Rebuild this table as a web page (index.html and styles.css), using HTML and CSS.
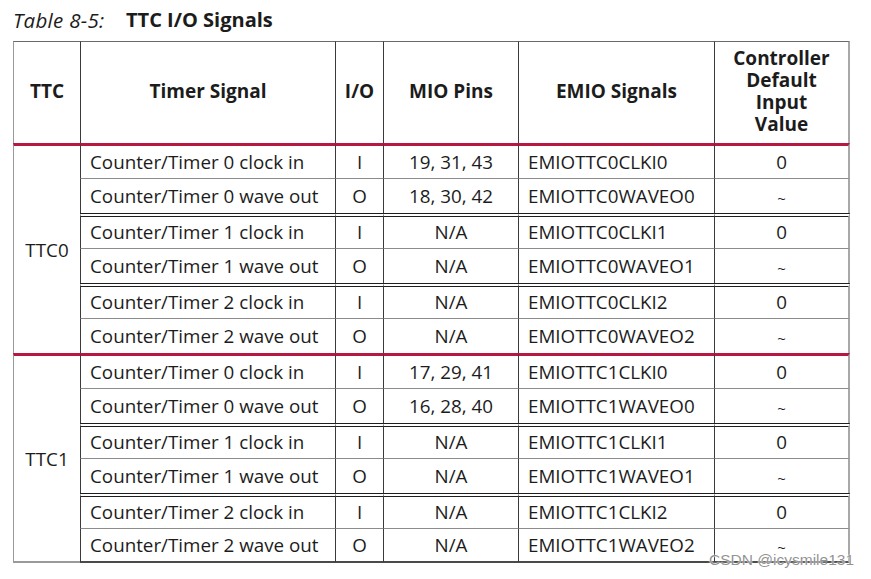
FILE: index.html
```html
<!DOCTYPE html>
<html>
<head>
<meta charset="utf-8">
<link rel="stylesheet" href="styles.css">
</head>
<body>
<div class="page">
  <div class="caption"><span class="cap-num">Table 8-5:</span><span class="cap-title">TTC I/O Signals</span></div>
  <table class="sig">
    <colgroup>
      <col class="c1"><col class="c2"><col class="c3"><col class="c4"><col class="c5"><col class="c6">
    </colgroup>
    <thead>
      <tr>
        <th class="first">TTC</th>
        <th>Timer Signal</th>
        <th>I/O</th>
        <th>MIO Pins</th>
        <th>EMIO Signals</th>
        <th class="last">Controller<br>Default<br>Input<br>Value</th>
      </tr>
    </thead>
    <tbody>
      <tr class="red">
        <td class="ttc" rowspan="6">TTC0</td>
        <td class="l">Counter/Timer 0 clock in</td><td>I</td><td>19, 31, 43</td><td class="l">EMIOTTC0CLKI0</td><td class="last">0</td>
      </tr>
      <tr>
        <td class="l">Counter/Timer 0 wave out</td><td>O</td><td>18, 30, 42</td><td class="l">EMIOTTC0WAVEO0</td><td class="last tilde">~</td>
      </tr>
      <tr class="dbl">
        <td class="l">Counter/Timer 1 clock in</td><td>I</td><td>N/A</td><td class="l">EMIOTTC0CLKI1</td><td class="last">0</td>
      </tr>
      <tr>
        <td class="l">Counter/Timer 1 wave out</td><td>O</td><td>N/A</td><td class="l">EMIOTTC0WAVEO1</td><td class="last tilde">~</td>
      </tr>
      <tr class="dbl">
        <td class="l">Counter/Timer 2 clock in</td><td>I</td><td>N/A</td><td class="l">EMIOTTC0CLKI2</td><td class="last">0</td>
      </tr>
      <tr>
        <td class="l">Counter/Timer 2 wave out</td><td>O</td><td>N/A</td><td class="l">EMIOTTC0WAVEO2</td><td class="last tilde">~</td>
      </tr>
      <tr class="red">
        <td class="ttc ttc-last" rowspan="6">TTC1</td>
        <td class="l">Counter/Timer 0 clock in</td><td>I</td><td>17, 29, 41</td><td class="l">EMIOTTC1CLKI0</td><td class="last">0</td>
      </tr>
      <tr>
        <td class="l">Counter/Timer 0 wave out</td><td>O</td><td>16, 28, 40</td><td class="l">EMIOTTC1WAVEO0</td><td class="last tilde">~</td>
      </tr>
      <tr class="dbl">
        <td class="l">Counter/Timer 1 clock in</td><td>I</td><td>N/A</td><td class="l">EMIOTTC1CLKI1</td><td class="last">0</td>
      </tr>
      <tr>
        <td class="l">Counter/Timer 1 wave out</td><td>O</td><td>N/A</td><td class="l">EMIOTTC1WAVEO1</td><td class="last tilde">~</td>
      </tr>
      <tr class="dbl">
        <td class="l">Counter/Timer 2 clock in</td><td>I</td><td>N/A</td><td class="l">EMIOTTC1CLKI2</td><td class="last">0</td>
      </tr>
      <tr class="end">
        <td class="l">Counter/Timer 2 wave out</td><td>O</td><td>N/A</td><td class="l">EMIOTTC1WAVEO2</td><td class="last tilde">~</td>
      </tr>
    </tbody>
  </table>
  <div class="watermark">CSDN @icysmile131</div>
</div>
</body>
</html>
```

FILE: styles.css
```css
html, body {
  margin: 0;
  padding: 0;
  background: #ffffff;
}

.page {
  position: relative;
  width: 871px;
  height: 579px;
  padding: 7px 0 0 13px;
  box-sizing: border-box;
  font-family: "Open Sans", "Noto Sans", sans-serif;
  color: #1c1c1c;
}

.caption {
  height: 34px;
  display: flex;
  align-items: flex-start;
  font-size: 20px;
  line-height: 26px;
}

.cap-num {
  font-style: italic;
  width: 113px;
  font-size: 20.5px;
  letter-spacing: 0.3px;
}

.cap-title {
  font-weight: 700;
}

.sig {
  border-collapse: separate;
  border-spacing: 0;
  table-layout: fixed;
  width: 837px;
  font-size: 18.8px;
}

.c1 { width: 67px; }
.c2 { width: 255px; }
.c3 { width: 48px; }
.c4 { width: 135px; }
.c5 { width: 196px; }
.c6 { width: 136px; }

.sig th,
.sig td {
  padding: 0;
  text-align: center;
  vertical-align: middle;
  border-left: 1px solid #3a3a3a;
  box-sizing: border-box;
}

.sig th.first,
.sig td.ttc {
  border-left: 1.5px solid #9a9a9a;
}

.sig .last {
  border-right: 2px solid #a8a8a8;
}

.sig thead tr {
  height: 102px;
}

.sig th {
  font-weight: 700;
  font-size: 19px;
  line-height: 22px;
  padding-bottom: 4px;
  border-top: 1px solid #6a6a6a;
}

.sig tbody tr {
  height: 35px;
}

.sig tbody td {
  border-top: 1px solid #8c8c8c;
  line-height: 22px;
}

.sig tbody tr.dbl td {
  border-top: 4px double #1e1e1e;
  padding-bottom: 2px;
}

.sig tbody tr.red td {
  border-top: 3px solid #b8173f;
}

.sig tbody tr.end td {
  border-bottom: 2px solid #4a4a4a;
}

.sig td.ttc-last {
  border-bottom: 2px solid #9a9a9a;
}

.sig td.l {
  text-align: left;
  padding-left: 9px;
}

.sig td.tilde {
  font-size: 15px;
  padding-top: 3px;
}

.watermark {
  position: absolute;
  right: 17px;
  bottom: 11px;
  font-family: "Liberation Sans", Arial, sans-serif;
  font-size: 15.5px;
  line-height: 16px;
  color: rgba(110, 110, 110, 0.75);
  text-shadow: 0 0 2px #ffffff, 0 0 1px #ffffff;
}
```
